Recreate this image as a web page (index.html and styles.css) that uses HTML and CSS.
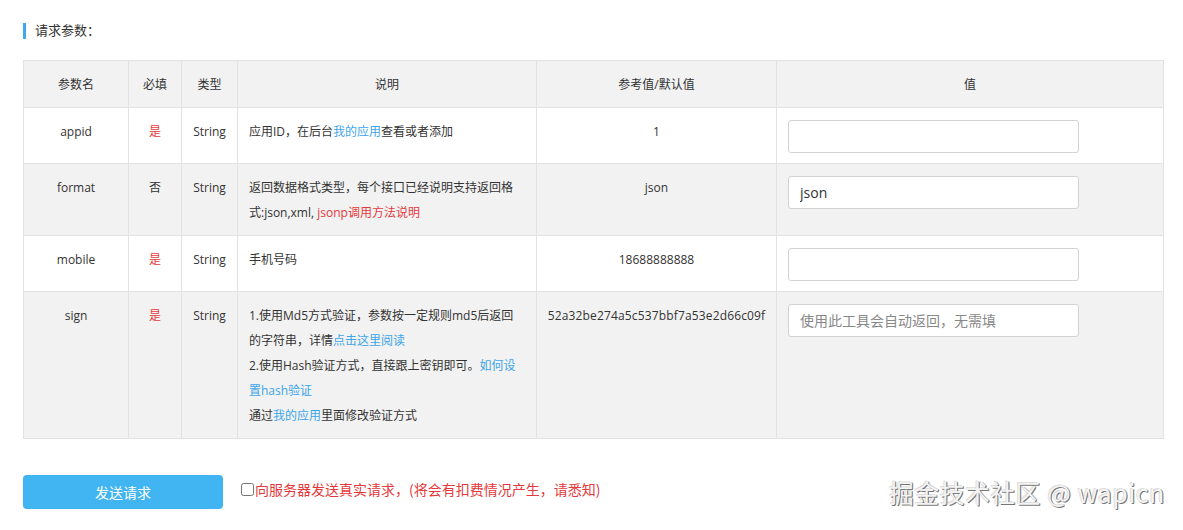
FILE: index.html
```html
<!DOCTYPE html>
<html lang="zh-CN">
<head>
<meta charset="utf-8">
<title>请求参数</title>
<link rel="stylesheet" href="styles.css">
</head>
<body>
<div class="page">
  <div class="title"><span class="bar"></span>请求参数：</div>
  <table class="params">
    <colgroup>
      <col class="c1"><col class="c2"><col class="c3"><col class="c4"><col class="c5"><col class="c6">
    </colgroup>
    <thead>
      <tr><th>参数名</th><th>必填</th><th>类型</th><th>说明</th><th>参考值/默认值</th><th>值</th></tr>
    </thead>
    <tbody>
      <tr>
        <td class="ctr">appid</td>
        <td class="ctr red">是</td>
        <td class="ctr">String</td>
        <td>应用ID，在后台<a class="link">我的应用</a>查看或者添加</td>
        <td class="ctr">1</td>
        <td><input class="field" type="text"></td>
      </tr>
      <tr class="alt">
        <td class="ctr">format</td>
        <td class="ctr">否</td>
        <td class="ctr">String</td>
        <td>返回数据格式类型，每个接口已经说明支持返回格式:json,xml, <a class="redlink">jsonp调用方法说明</a></td>
        <td class="ctr">json</td>
        <td><input class="field" type="text" value="json"></td>
      </tr>
      <tr>
        <td class="ctr">mobile</td>
        <td class="ctr red">是</td>
        <td class="ctr">String</td>
        <td>手机号码</td>
        <td class="ctr">18688888888</td>
        <td><input class="field" type="text"></td>
      </tr>
      <tr class="alt">
        <td class="ctr">sign</td>
        <td class="ctr red">是</td>
        <td class="ctr">String</td>
        <td>1.使用Md5方式验证，参数按一定规则md5后返回的字符串，详情<a class="link">点击这里阅读</a><br>2.使用Hash验证方式，直接跟上密钥即可。<a class="link">如何设置hash验证</a><br>通过<a class="link">我的应用</a>里面修改验证方式</td>
        <td class="ctr hash">52a32be274a5c537bbf7a53e2d66c09f</td>
        <td><input class="field" type="text" placeholder="使用此工具会自动返回，无需填"></td>
      </tr>
    </tbody>
  </table>
  <div class="actions">
    <button class="send" type="button">发送请求</button>
    <label class="real"><input type="checkbox" class="chk">向服务器发送真实请求，(将会有扣费情况产生，请悉知)</label>
  </div>
  <div class="watermark">掘金技术社区 @ wapicn</div>
</div>
</body>
</html>
```

FILE: styles.css
```css
html, body {
  margin: 0;
  padding: 0;
  background: #fff;
}
body {
  font-family: "Open Sans", "Noto Sans CJK SC", sans-serif;
  color: #333;
  font-size: 12px;
}
.page {
  position: relative;
  width: 1183px;
  height: 530px;
  padding: 22px 20px 0 23px;
  box-sizing: border-box;
}
.title {
  display: flex;
  align-items: center;
  font-size: 13px;
  height: 17px;
  line-height: 17px;
  color: #333;
}
.bar {
  display: inline-block;
  width: 3px;
  height: 16px;
  background: #3fa9ec;
  margin-right: 9px;
}
.params {
  margin-top: 21px;
  width: 1140px;
  border-collapse: collapse;
  table-layout: fixed;
  border: 1px solid #e2e2e2;
}
.c1 { width: 105px; }
.c2 { width: 53px; }
.c3 { width: 56px; }
.c4 { width: 299px; }
.c5 { width: 240px; }
.c6 { width: 387px; }
.params th, .params td {
  border: 1px solid #e2e2e2;
  padding: 11px 11px 10px;
  line-height: 25px;
  vertical-align: top;
  font-weight: normal;
  font-size: 12px;
  text-align: left;
}
.params th {
  background: #f2f2f2;
  text-align: center;
}
.params tr.alt td {
  background: #f2f2f2;
}
.params td.ctr {
  text-align: center;
}
.params td.hash {
  padding: 11px 6px 10px;
  letter-spacing: 0.15px;
  white-space: nowrap;
}
.red {
  color: #e4393c;
}
.link {
  color: #3ca5e9;
  cursor: pointer;
}
.redlink {
  color: #e4393c;
  cursor: pointer;
}
.field {
  display: block;
  width: 291px;
  height: 33px;
  box-sizing: border-box;
  border: 1px solid #d2d2d2;
  border-radius: 3px;
  padding: 0 11px;
  font-family: "Open Sans", "Noto Sans CJK SC", sans-serif;
  font-size: 14px;
  color: #333;
  background: #fff;
  margin-top: 1px;
}
.field::placeholder {
  color: #888;
}
.actions {
  display: flex;
  align-items: center;
  margin-top: 36px;
}
.send {
  width: 200px;
  height: 34px;
  border: none;
  border-radius: 4px;
  background: #41b4f2;
  color: #fff;
  font-family: "Noto Sans CJK SC", sans-serif;
  font-size: 14px;
  margin-right: 18px;
}
.real {
  display: flex;
  align-items: center;
  color: #e4393c;
  font-family: "Noto Sans CJK SC", sans-serif;
  font-size: 14px;
  margin-top: -6px;
}
.chk {
  margin: 0 1px 0 0;
  width: 13px;
  height: 13px;
}
.watermark {
  position: absolute;
  right: 18px;
  bottom: 20px;
  font-family: "Noto Sans CJK SC", sans-serif;
  font-size: 24.5px;
  color: #f4f4f4;
  text-shadow: 1px 1px 0 #777, -1px -1px 0 #ddd, 1px 0 0 #999;
  letter-spacing: 0.8px;
}
```
